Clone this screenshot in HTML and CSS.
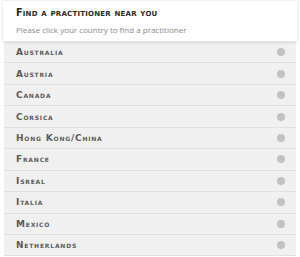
FILE: index.html
```html
<!DOCTYPE html>
<html>
<head>
<meta charset="utf-8">
<link rel="stylesheet" href="styles.css">
</head>
<body>
<div class="panel">
  <div class="header">
    <div class="title">Find a practitioner near you</div>
    <div class="subtitle">Please click your country to find a practitioner</div>
  </div>
  <ul class="list">
    <li class="row"><span class="name">Australia</span><span class="dot"></span></li>
    <li class="row"><span class="name">Austria</span><span class="dot"></span></li>
    <li class="row"><span class="name">Canada</span><span class="dot"></span></li>
    <li class="row"><span class="name">Corsica</span><span class="dot"></span></li>
    <li class="row"><span class="name">Hong Kong/China</span><span class="dot"></span></li>
    <li class="row"><span class="name">France</span><span class="dot"></span></li>
    <li class="row"><span class="name">Isreal</span><span class="dot"></span></li>
    <li class="row"><span class="name">Italia</span><span class="dot"></span></li>
    <li class="row"><span class="name">Mexico</span><span class="dot"></span></li>
    <li class="row"><span class="name">Netherlands</span><span class="dot"></span></li>
  </ul>
</div>
</body>
</html>
```

FILE: styles.css
```css
html, body {
  margin: 0;
  padding: 0;
  background: #ffffff;
}
body {
  font-family: "Open Sans", "Liberation Sans", sans-serif;
  width: 300px;
  height: 257px;
  overflow: hidden;
}
.panel {
  padding: 0 3px;
}
.header {
  background: #ffffff;
  height: 41px;
  box-sizing: border-box;
  padding: 6px 13px 0;
  box-shadow: 0 1px 3px rgba(0,0,0,0.18);
  position: relative;
  z-index: 1;
  border-top: 1px solid #f2f2f2;
}
.title {
  font-family: "DejaVu Sans", "Open Sans", sans-serif;
  font-weight: 700;
  font-variant: small-caps;
  font-size: 9.6px;
  color: #2a2a2a;
  letter-spacing: 0.22px;
  line-height: 12px;
}
.subtitle {
  font-size: 8px;
  color: #8a8a8a;
  line-height: 12px;
  margin-top: 5px;
}
.list {
  list-style: none;
  margin: 1px 0 0;
  padding: 0 1px;
}
.row {
  display: flex;
  align-items: center;
  justify-content: space-between;
  height: 20.45px;
  border-bottom: 1px solid #e0e0e0;
  background: #f0f0f0;
  padding: 0 11px 0 12px;
  box-sizing: content-box;
}
.name {
  font-family: "DejaVu Sans", "Open Sans", sans-serif;
  font-weight: 700;
  font-variant: small-caps;
  font-size: 9px;
  color: #5a5a5a;
  letter-spacing: 0.8px;
}
.dot {
  width: 8px;
  height: 8px;
  border-radius: 50%;
  background: #c2c2c2;
}
```
